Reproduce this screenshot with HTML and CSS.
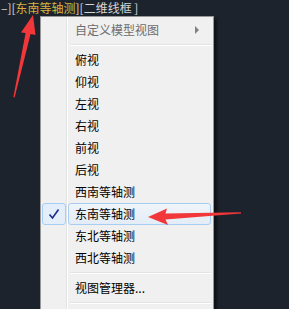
FILE: index.html
```html
<!DOCTYPE html>
<html>
<head>
<meta charset="utf-8">
<link rel="stylesheet" href="styles.css">
</head>
<body>
<div class="viewport">
  <div class="label">–][<span class="hl">东南等轴测</span>][二维线框 ]</div>

  <div class="menu">
    <div class="item disabled"><span class="text">自定义模型视图</span><span class="sub"></span></div>
    <div class="sep"></div>
    <div class="item"><span class="text">俯视</span></div>
    <div class="item"><span class="text">仰视</span></div>
    <div class="item"><span class="text">左视</span></div>
    <div class="item"><span class="text">右视</span></div>
    <div class="item"><span class="text">前视</span></div>
    <div class="item"><span class="text">后视</span></div>
    <div class="item"><span class="text">西南等轴测</span></div>
    <div class="item checked"><span class="check"><svg width="12" height="12" viewBox="0 0 12 12"><path d="M1.5 6.5 L4.5 10 L10.5 1.5" fill="none" stroke="#1a2a8f" stroke-width="1.6"/></svg></span><span class="text">东南等轴测</span></div>
    <div class="item"><span class="text">东北等轴测</span></div>
    <div class="item"><span class="text">西北等轴测</span></div>
    <div class="sep"></div>
    <div class="item"><span class="text">视图管理器...</span></div>
    <div class="sep"></div>
    <div class="item"><span class="text"></span></div>
  </div>

  <svg class="arrows" width="289" height="309" viewBox="0 0 289 309">
    <polygon fill="#f2373a" points="33,15 35.5,35 30.6,34 14.6,97.5 13.4,97 25.6,33 21,32.5"/>
    <polygon fill="#f2373a" points="148,217 167,208.5 165.5,213.5 241,212.3 241,213.6 165.5,219.5 168,225"/>
  </svg>
</div>
</body>
</html>
```
FILE: styles.css
```css
html, body {
  margin: 0;
  padding: 0;
  background: #1d232d;
  font-family: "Noto Sans CJK SC", "Noto Sans", sans-serif;
  font-size: 12px;
}
.viewport {
  position: relative;
  width: 289px;
  height: 309px;
  overflow: hidden;
}
.label {
  color: #d6d6d6;
  line-height: 16px;
  padding-left: 1px;
  white-space: nowrap;
}
.hl {
  color: #d7b43c;
}
.menu {
  position: absolute;
  left: 40px;
  top: 16px;
  width: 168px;
  padding: 2px;
  background: #f0f0f0;
  border: 1px solid #979797;
  box-shadow: 3px 3px 3px rgba(0, 0, 0, 0.55);
  background-image: linear-gradient(to right, transparent 25px, #e2e3e3 25px, #e2e3e3 26px, #ffffff 26px, #ffffff 27px, transparent 27px);
}
.item {
  position: relative;
  height: 22px;
  display: flex;
  align-items: center;
  padding-left: 32px;
  color: #000;
}
.item.disabled {
  color: #6d6d6d;
}
.text {
  line-height: 22px;
}
.sub {
  position: absolute;
  right: 12px;
  top: 7px;
  width: 0;
  height: 0;
  border-top: 4px solid transparent;
  border-bottom: 4px solid transparent;
  border-left: 4px solid #808080;
}
.sep {
  height: 8px;
  margin-left: 27px;
  background: linear-gradient(to bottom, transparent 3px, #e2e3e3 3px, #e2e3e3 4px, #ffffff 4px, #ffffff 5px, transparent 5px);
}
.item.checked::after {
  content: "";
  position: absolute;
  left: 25px;
  right: 0;
  top: 0;
  bottom: 0;
  border: 1px solid #a8cdf2;
  border-radius: 3px;
  background: linear-gradient(to bottom, rgba(240, 246, 253, 0.7), rgba(222, 234, 249, 0.7));
}
.check {
  position: absolute;
  left: -1px;
  top: 0;
  width: 22px;
  height: 20px;
  border: 1px solid #a8cdf2;
  border-radius: 3px;
  background: #e4eefb;
  display: flex;
  align-items: center;
  justify-content: center;
}
.checked .text {
  position: relative;
  z-index: 1;
}
.arrows {
  position: absolute;
  left: 0;
  top: 0;
}
```
